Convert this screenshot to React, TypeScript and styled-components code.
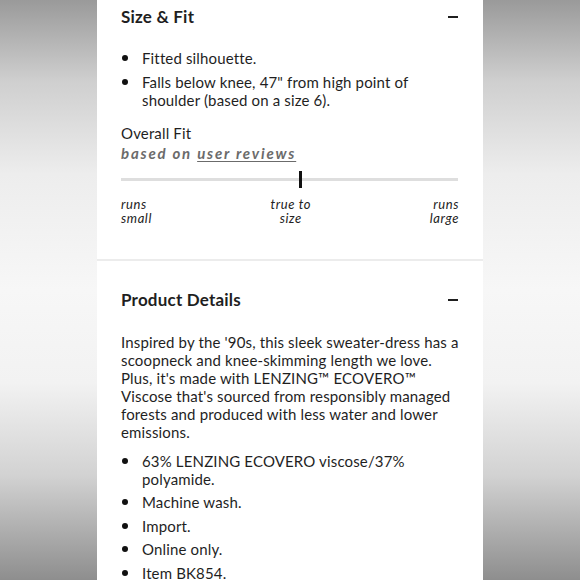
import styled, { createGlobalStyle } from 'styled-components';

const GlobalStyle = createGlobalStyle`
  html, body {
    margin: 0;
    padding: 0;
  }
  body {
    width: 580px;
    height: 580px;
    overflow: hidden;
    font-family: Lato, 'Noto Sans', sans-serif;
    color: #1f1f1f;
  }
`;

const Backdrop = styled.div`
  width: 580px;
  height: 580px;
  overflow: hidden;
  background: linear-gradient(
    to bottom,
    #9a9a9a 0%,
    #cfcfcf 14%,
    #ededed 30%,
    #f7f7f7 50%,
    #f2f2f2 66%,
    #d2d2d2 82%,
    #8e8e8e 100%
  );
`;

const Panel = styled.div`
  width: 386px;
  height: 580px;
  margin: 0 auto;
  background: #ffffff;
`;

const Section = styled.section<{ $top: number; $bottom: number }>`
  padding: ${(p) => p.$top}px 24px ${(p) => p.$bottom}px;

  & + & {
    border-top: 2px solid #ececec;
  }
`;

const SectionHeader = styled.div<{ $gap: number }>`
  display: flex;
  justify-content: space-between;
  align-items: center;
  margin-bottom: ${(p) => p.$gap}px;
`;

const Title = styled.h2`
  margin: 0;
  font-size: 17px;
  line-height: 20px;
  font-weight: 700;
  letter-spacing: 0.2px;
`;

const Collapse = styled.span`
  display: block;
  width: 10px;
  height: 2px;
  margin-right: 1px;
  background: #1f1f1f;
`;

const BulletList = styled.ul`
  list-style: none;
  margin: 0;
  padding: 0;
  display: flex;
  flex-direction: column;
  gap: 5.5px;
`;

const Bullet = styled.li`
  position: relative;
  padding-left: 21px;
  font-size: 15px;
  line-height: 18px;
  letter-spacing: 0.15px;

  &::before {
    content: '';
    position: absolute;
    left: 1px;
    top: 6px;
    width: 6px;
    height: 6px;
    border-radius: 50%;
    background: #111;
  }
`;

const FitBlock = styled.div`
  margin-top: 15px;
`;

const FitTitle = styled.div`
  font-size: 15px;
  line-height: 18px;
  letter-spacing: 0.15px;
`;

const FitSource = styled.div`
  margin-top: 2px;
  font-size: 15px;
  line-height: 18px;
  font-weight: 700;
  font-style: italic;
  letter-spacing: 1.8px;
  color: #6b6b6b;

  a {
    color: inherit;
    text-decoration: underline;
    text-underline-offset: 2px;
  }
`;

const Track = styled.div`
  position: relative;
  height: 3px;
  margin: 16px 1px 0 0;
  background: #dedede;
`;

const Marker = styled.span`
  position: absolute;
  top: -7px;
  width: 3px;
  height: 17px;
  margin-left: -1px;
  background: #111;
`;

const Scale = styled.div`
  display: flex;
  justify-content: space-between;
  margin-top: 16px;
`;

const ScaleLabel = styled.span<{ $align: string }>`
  font-size: 13px;
  line-height: 14px;
  font-style: italic;
  letter-spacing: 0.6px;
  text-align: ${(p) => p.$align};
  color: #222;
`;

const Paragraph = styled.p`
  margin: 0 0 11px;
  font-size: 15px;
  line-height: 18px;
  letter-spacing: 0.15px;
`;

const fitPosition = 0.53;

function App() {
  return (
    <>
      <GlobalStyle />
      <Backdrop>
        <Panel>
          <Section $top={7} $bottom={34}>
            <SectionHeader $gap={22}>
              <Title>Size &amp; Fit</Title>
              <Collapse />
            </SectionHeader>
            <BulletList>
              <Bullet>Fitted silhouette.</Bullet>
              <Bullet>
                Falls below knee, 47" from high point of shoulder (based on a
                size 6).
              </Bullet>
            </BulletList>
            <FitBlock>
              <FitTitle>Overall Fit</FitTitle>
              <FitSource>
                based on <a href="#reviews">user reviews</a>
              </FitSource>
              <Track>
                <Marker style={{ left: `${fitPosition * 100}%` }} />
              </Track>
              <Scale>
                <ScaleLabel $align="left">
                  runs
                  <br />
                  small
                </ScaleLabel>
                <ScaleLabel $align="center">
                  true to
                  <br />
                  size
                </ScaleLabel>
                <ScaleLabel $align="right">
                  runs
                  <br />
                  large
                </ScaleLabel>
              </Scale>
            </FitBlock>
          </Section>

          <Section $top={29} $bottom={20}>
            <SectionHeader $gap={23}>
              <Title>Product Details</Title>
              <Collapse />
            </SectionHeader>
            <Paragraph>
              Inspired by the '90s, this sleek sweater-dress has a scoopneck and
              knee-skimming length we love. Plus, it's made with LENZING™
              ECOVERO™ Viscose that's sourced from responsibly managed forests
              and produced with less water and lower emissions.
            </Paragraph>
            <BulletList>
              <Bullet>63% LENZING ECOVERO viscose/37% polyamide.</Bullet>
              <Bullet>Machine wash.</Bullet>
              <Bullet>Import.</Bullet>
              <Bullet>Online only.</Bullet>
              <Bullet>Item BK854.</Bullet>
            </BulletList>
          </Section>
        </Panel>
      </Backdrop>
    </>
  );
}

export default App;
